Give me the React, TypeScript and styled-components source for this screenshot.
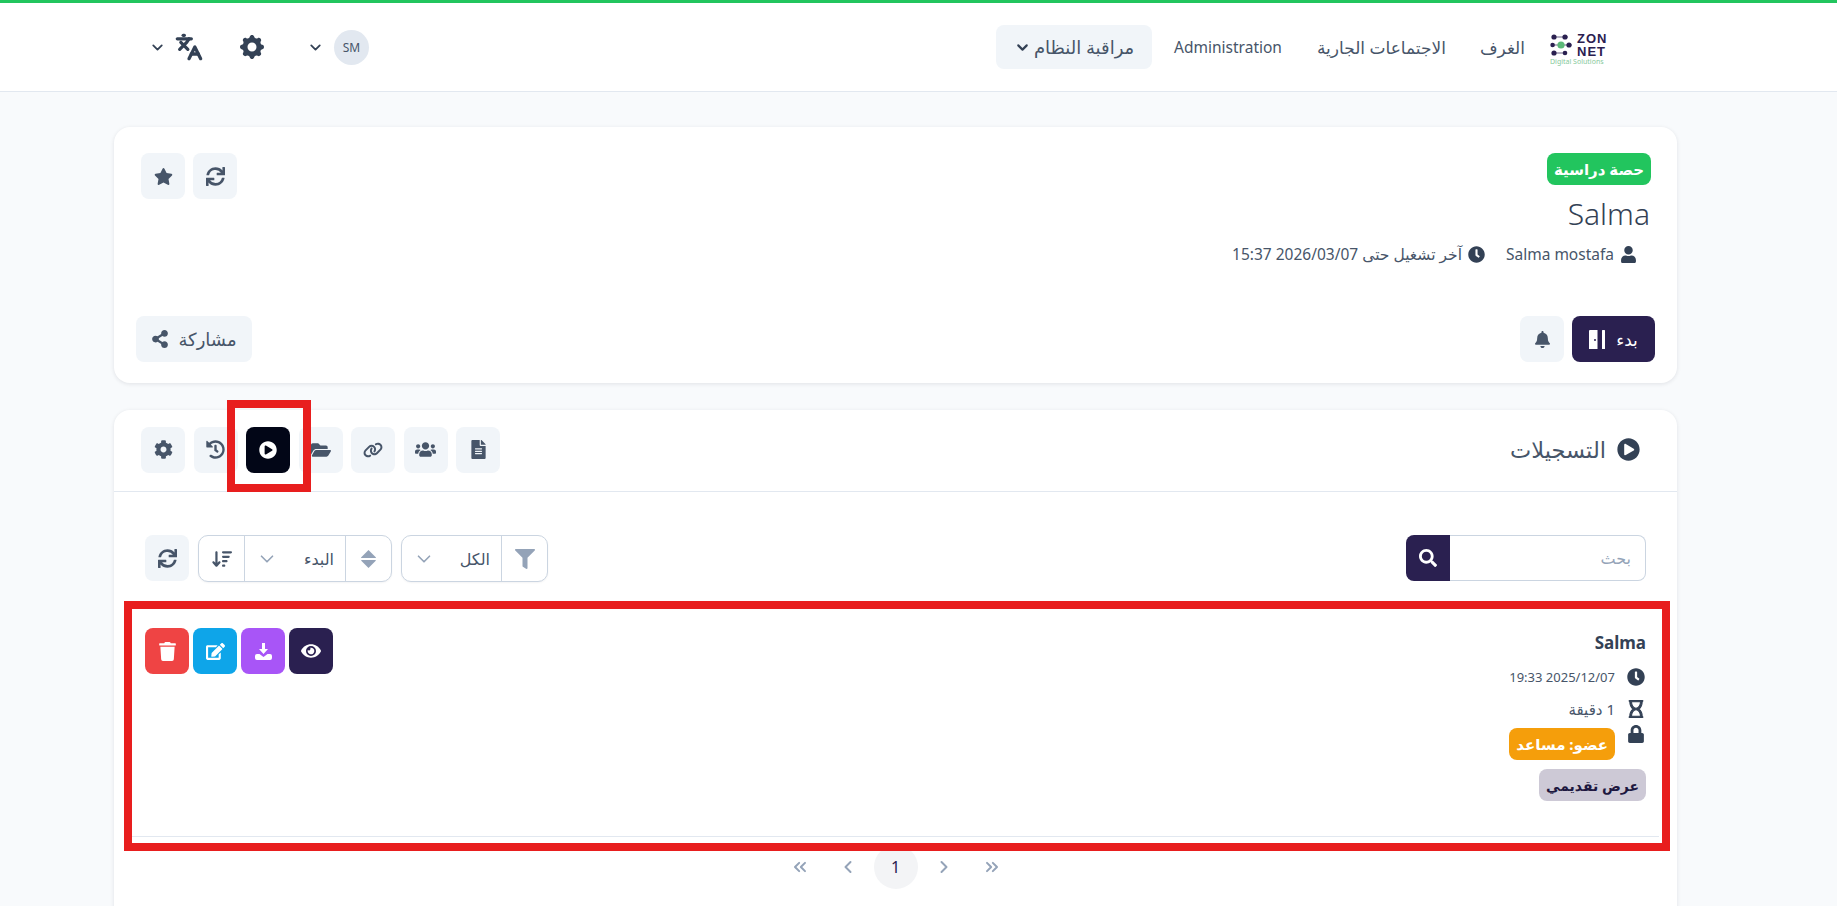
import React from "react";
import styled, { createGlobalStyle } from "styled-components";
import {
  FaBell,
  FaClock,
  FaCog,
  FaEdit,
  FaEye,
  FaFileAlt,
  FaFilter,
  FaFolderOpen,
  FaHistory,
  FaRegHourglass,
  FaLock,
  FaPlayCircle,
  FaSearch,
  FaShareAlt,
  FaStar,
  FaSync,
  FaTrash,
  FaUser,
  FaUsers,
} from "react-icons/fa";
import { FaLink, FaArrowDownWideShort } from "react-icons/fa6";
import { HiCog } from "react-icons/hi";
import {
  ChevronDown,
  ChevronLeft,
  ChevronRight,
  ChevronsLeft,
  ChevronsRight,
  Languages,
} from "lucide-react";

const GlobalStyle = createGlobalStyle`
  html, body {
    margin: 0;
    height: 100%;
    overflow: hidden;
    background: #f8fafc;
  }
  * {
    box-sizing: border-box;
  }
`;

const Page = styled.div`
  position: relative;
  height: 906px;
  overflow: hidden;
  font-family: "Noto Sans", "DejaVu Sans", sans-serif;
  color: #334155;
`;

const TopBar = styled.header`
  height: 92px;
  background: #fff;
  border-top: 3px solid #22c55e;
  border-bottom: 1px solid #e2e8f0;
  padding: 0 228px 0 149px;
  display: flex;
  align-items: center;
  justify-content: space-between;
`;

const NavLinks = styled.nav`
  display: flex;
  align-items: center;
`;

const LogoBox = styled.div`
  width: 59px;
  height: 33px;
  display: flex;
  flex-direction: column;
  margin-left: 25px;
  margin-top: 3px;
`;

const LogoTop = styled.div`
  direction: ltr;
  display: flex;
  align-items: center;
  gap: 3px;
`;

const LogoWords = styled.div`
  font-family: "Liberation Sans", sans-serif;
  font-weight: 700;
  font-size: 13px;
  line-height: 13px;
  letter-spacing: 1px;
  color: #2a2050;
`;

const LogoTag = styled.div`
  direction: ltr;
  font-size: 7px;
  line-height: 8px;
  color: #86c99b;
  white-space: nowrap;
`;

const NavLink = styled.a<{ $gap: number; $size: number }>`
  font-size: ${(p) => p.$size}px;
  color: #475569;
  margin-left: ${(p) => p.$gap}px;
  white-space: nowrap;
`;

const NavMenuButton = styled.button`
  width: 156px;
  height: 44px;
  border: 0;
  border-radius: 8px;
  background: #f1f5f9;
  color: #475569;
  font: inherit;
  font-size: 18px;
  display: flex;
  align-items: center;
  justify-content: center;
  gap: 3px;
  svg {
    color: #334155;
  }
`;

const UserTools = styled.div`
  display: flex;
  align-items: center;
`;

const Avatar = styled.div`
  width: 35px;
  height: 35px;
  border-radius: 50%;
  background: #e2e8f0;
  color: #475569;
  font-size: 12px;
  display: flex;
  align-items: center;
  justify-content: center;
`;

const ToolIcon = styled.span<{ $gap: number }>`
  display: flex;
  align-items: center;
  color: #334155;
  margin-right: ${(p) => p.$gap}px;
`;

const Main = styled.main`
  padding: 35px 160px 0 114px;
  display: flex;
  flex-direction: column;
  gap: 27px;
`;

const Card = styled.section`
  background: #fff;
  border-radius: 16px;
  box-shadow: 0 1px 4px rgba(15, 23, 42, 0.1);
`;

const HeroCard = styled(Card)`
  height: 256px;
  padding: 26px 22px 21px;
  display: flex;
  flex-direction: column;
  justify-content: space-between;
`;

const HeroTop = styled.div`
  display: flex;
  justify-content: space-between;
  align-items: flex-start;
  padding-left: 5px;
`;

const HeroInfo = styled.div`
  padding-right: 4px;
`;

const TypeBadge = styled.span<{ $bg: string; $fg?: string; $size?: number }>`
  display: inline-flex;
  align-items: center;
  height: 32px;
  padding: 0 7px;
  border-radius: 8px;
  font-size: ${(p) => p.$size ?? 15}px;
  font-weight: 700;
  white-space: nowrap;
  background: ${(p) => p.$bg};
  color: ${(p) => p.$fg ?? "#fff"};
`;

const RoleBadge = styled(TypeBadge)`
  margin-top: 4px;
`;

const RoomTitle = styled.h1`
  margin: 9px 1px 0 0;
  font-size: 30px;
  line-height: 40px;
  font-weight: 300;
  color: #334155;
`;

const MetaRow = styled.div`
  margin-top: 10px;
  padding-right: 14px;
  display: flex;
  align-items: center;
  gap: 21px;
  font-size: 15.5px;
  line-height: 20px;
  color: #475569;
`;

const MetaItem = styled.span`
  display: flex;
  align-items: center;
  gap: 6px;
  white-space: nowrap;
  svg {
    color: #334155;
    font-size: 17px;
    flex: none;
  }
`;

const ButtonRow = styled.div<{ $gap?: number }>`
  display: flex;
  align-items: center;
  gap: ${(p) => p.$gap ?? 8}px;
`;

const HeroBottom = styled.div`
  display: flex;
  justify-content: space-between;
  align-items: center;
`;

const IconButton = styled.button<{ $bg?: string; $fg?: string; $icon?: number }>`
  width: 44px;
  height: 46px;
  border: 0;
  padding: 0;
  border-radius: 8px;
  font-size: ${(p) => p.$icon ?? 19}px;
  background: ${(p) => p.$bg ?? "#f1f5f9"};
  color: ${(p) => p.$fg ?? "#475569"};
  display: flex;
  align-items: center;
  justify-content: center;
  flex: none;
`;

const StartButton = styled.button`
  width: 83px;
  height: 46px;
  border: 0;
  border-radius: 8px;
  background: #2a2050;
  color: #fff;
  font: inherit;
  font-size: 17px;
  display: flex;
  align-items: center;
  justify-content: center;
  gap: 11px;
`;

const ShareButton = styled.button`
  width: 116px;
  height: 46px;
  border: 0;
  border-radius: 8px;
  background: #f1f5f9;
  color: #475569;
  font: inherit;
  font-size: 18px;
  display: flex;
  align-items: center;
  justify-content: center;
  gap: 9px;
  svg {
    font-size: 18px;
  }
`;

const RecordingsCard = styled(Card)`
  height: 600px;
`;

const CardHeader = styled.div`
  height: 82px;
  padding: 0 37px 2px 27px;
  border-bottom: 1px solid #e2e8f0;
  display: flex;
  align-items: center;
  justify-content: space-between;
`;

const SectionTitle = styled.h2`
  margin: 0;
  font-size: 22.5px;
  font-weight: 400;
  color: #475569;
  display: flex;
  align-items: center;
  gap: 11px;
  svg {
    color: #334155;
    font-size: 23px;
  }
`;

const CardBody = styled.div`
  padding: 43px 18px 0;
`;

const Toolbar = styled.div`
  margin: 0 13px 46px;
  height: 47px;
  display: flex;
  align-items: flex-start;
  justify-content: space-between;
`;

const SearchBox = styled.div`
  width: 240px;
  height: 46px;
  display: flex;
`;

const SearchInput = styled.input`
  flex: 1;
  min-width: 0;
  height: 46px;
  border: 1px solid #cbd5e1;
  border-left: 0;
  border-radius: 0 8px 8px 0;
  padding: 0 14px;
  font: inherit;
  font-size: 16px;
  color: #334155;
  background: #fff;
  &::placeholder {
    color: #94a3b8;
  }
`;

const SearchButton = styled.button`
  width: 44px;
  height: 46px;
  border: 0;
  border-radius: 8px 0 0 8px;
  background: #2a2050;
  color: #fff;
  font-size: 18px;
  display: flex;
  align-items: center;
  justify-content: center;
`;

const Filters = styled.div`
  display: flex;
  gap: 9px;
`;

const SelectGroup = styled.div`
  height: 47px;
  border: 1px solid #cbd5e1;
  border-radius: 10px;
  display: flex;
  background: #fff;
  box-shadow: 0 1px 2px rgba(15, 23, 42, 0.05);
`;

const SelectAddon = styled.span<{ $fg?: string }>`
  width: 45px;
  display: flex;
  align-items: center;
  justify-content: center;
  font-size: 20px;
  color: ${(p) => p.$fg ?? "#94a3b8"};
`;

const SelectValue = styled.span<{ $width: number }>`
  width: ${(p) => p.$width}px;
  padding: 0 11px 0 11px;
  border-right: 1px solid #cbd5e1;
  border-left: 1px solid #cbd5e1;
  display: flex;
  align-items: center;
  justify-content: space-between;
  font-size: 16px;
  color: #475569;
  svg {
    color: #94a3b8;
  }
`;

const PlainSelectValue = styled(SelectValue)`
  border-left: 0;
`;

const RecordingItem = styled.article`
  padding: 0 13px 35px;
  border-bottom: 1px solid #e2e8f0;
  display: flex;
  justify-content: space-between;
  align-items: flex-start;
`;

const RecordingInfo = styled.div`
  display: flex;
  flex-direction: column;
  align-items: flex-start;
`;

const RecordingName = styled.div`
  font-size: 17px;
  font-weight: 700;
  line-height: 22px;
  margin-top: 4px;
  margin-bottom: 13px;
  color: #334155;
`;

const InfoRow = styled.div<{ $height: number; $size?: number }>`
  height: ${(p) => p.$height}px;
  display: flex;
  align-items: flex-start;
  gap: 11px;
  font-size: ${(p) => p.$size ?? 13}px;
  line-height: 20px;
  color: #475569;
  white-space: nowrap;
`;

const InfoIcon = styled.span`
  width: 20px;
  height: 20px;
  font-size: 18px;
  color: #334155;
  display: flex;
  align-items: center;
  justify-content: center;
`;

const ActionRow = styled.div`
  display: flex;
  gap: 4px;
`;

const Pager = styled.div`
  margin-top: 8px;
  display: flex;
  justify-content: center;
  gap: 4px;
`;

const PageItem = styled.span<{ $current?: boolean }>`
  width: 44px;
  height: 44px;
  border-radius: 50%;
  display: flex;
  align-items: center;
  justify-content: center;
  font-size: 16px;
  background: ${(p) => (p.$current ? "#f3f4f6" : "transparent")};
  color: ${(p) => (p.$current ? "#2a2050" : "#94a3b8")};
`;

// the red frames drawn over the capture
const MarkFrame = styled.div`
  position: absolute;
  border: 8px solid #e81e1e;
  pointer-events: none;
`;

const TabMark = styled(MarkFrame)`
  left: 227px;
  top: 400px;
  width: 84px;
  height: 92px;
`;

const ListMark = styled(MarkFrame)`
  left: 124px;
  top: 601px;
  width: 1546px;
  height: 250px;
`;

const ZonDots: React.FC = () => (
  <svg width="24" height="24" viewBox="0 0 24 24">
    <path d="M4 4H18M3 12H22M4 20H16" stroke="#2a2050" strokeWidth="0.7" />
    <circle cx="4" cy="4" r="2.6" fill="#2a2050" />
    <circle cx="15" cy="4" r="2.6" fill="#2a2050" />
    <circle cx="2.6" cy="12" r="2.3" fill="#2a2050" />
    <circle cx="11" cy="12" r="3.6" fill="#5cb878" />
    <circle cx="19" cy="12" r="2.6" fill="#2a2050" />
    <circle cx="4" cy="20" r="2.6" fill="#2a2050" />
    <circle cx="15" cy="20" r="2.3" fill="#2a2050" />
  </svg>
);

const DoorIcon: React.FC = () => (
  <svg width="16" height="19" viewBox="0 0 16 19" fill="#fff">
    <path d="M0 1 Q0 0 1 0 H8.5 V19 H0 Z M6 9 a1 1 0 1 0 0 2 a1 1 0 1 0 0 -2 Z" fillRule="evenodd" />
    <rect x="13" y="0" width="3" height="19" rx="0.5" />
  </svg>
);

const SortIcon: React.FC = () => (
  <svg width="15" height="18" viewBox="0 0 15 18" fill="currentColor">
    <path d="M7.5 0 L15 7.5 Q15 8 14 8 H1 Q0 8 0 7.5 Z" />
    <path d="M0 10.5 Q0 10 1 10 H14 Q15 10 15 10.5 L7.5 18 Z" />
  </svg>
);

const TrayDownloadIcon: React.FC = () => (
  <svg width="17" height="17" viewBox="0 0 17 17" fill="currentColor">
    <path d="M7 0 H10 V6 H13 L8.5 11 L4 6 H7 Z" />
    <path d="M0 13 Q0 11 2 11 H4.5 L8.5 14 L12.5 11 H15 Q17 11 17 13 V15 Q17 17 15 17 H2 Q0 17 0 15 Z" />
  </svg>
);

const App: React.FC = () => {
  return (
    <Page dir="rtl">
      <GlobalStyle />
      <TopBar>
        <NavLinks>
          <LogoBox>
            <LogoTop>
              <ZonDots />
              <LogoWords>
                ZON
                <br />
                NET
              </LogoWords>
            </LogoTop>
            <LogoTag>Digital Solutions</LogoTag>
          </LogoBox>
          <NavLink $gap={34} $size={17}>الغرف</NavLink>
          <NavLink $gap={35} $size={17}>الاجتماعات الجارية</NavLink>
          <NavLink $gap={22} $size={15.5}>Administration</NavLink>
          <NavMenuButton>
            مراقبة النظام
            <ChevronDown size={17} strokeWidth={3} />
          </NavMenuButton>
        </NavLinks>
        <UserTools>
          <Avatar>SM</Avatar>
          <ToolIcon $gap={10}>
            <ChevronDown size={17} strokeWidth={2.5} />
          </ToolIcon>
          <ToolIcon $gap={40}>
            <HiCog size={30} />
          </ToolIcon>
          <ToolIcon $gap={34}>
            <Languages size={28} strokeWidth={2.8} />
          </ToolIcon>
          <ToolIcon $gap={9}>
            <ChevronDown size={17} strokeWidth={2.5} />
          </ToolIcon>
        </UserTools>
      </TopBar>

      <Main>
        <HeroCard>
          <HeroTop>
            <HeroInfo>
              <TypeBadge $bg="#22c55e">حصة دراسية</TypeBadge>
              <RoomTitle>Salma</RoomTitle>
              <MetaRow>
                <MetaItem>
                  <FaUser />
                  Salma mostafa
                </MetaItem>
                <MetaItem>
                  <FaClock />
                  آخر تشغيل حتى 2026/03/07 15:37
                </MetaItem>
              </MetaRow>
            </HeroInfo>
            <ButtonRow>
              <IconButton>
                <FaSync />
              </IconButton>
              <IconButton>
                <FaStar />
              </IconButton>
            </ButtonRow>
          </HeroTop>
          <HeroBottom>
            <ButtonRow>
              <StartButton>
                بدء
                <DoorIcon />
              </StartButton>
              <IconButton $icon={17}>
                <FaBell />
              </IconButton>
            </ButtonRow>
            <ShareButton>
              مشاركة
              <FaShareAlt />
            </ShareButton>
          </HeroBottom>
        </HeroCard>

        <RecordingsCard>
          <CardHeader>
            <SectionTitle>
              <FaPlayCircle />
              التسجيلات
            </SectionTitle>
            <ButtonRow $gap={8.5}>
              <IconButton>
                <FaFileAlt />
              </IconButton>
              <IconButton $icon={21}>
                <FaUsers />
              </IconButton>
              <IconButton $icon={20}>
                <FaLink />
              </IconButton>
              <IconButton $icon={20}>
                <FaFolderOpen />
              </IconButton>
              <IconButton $bg="#020617" $fg="#fff" $icon={18}>
                <FaPlayCircle />
              </IconButton>
              <IconButton>
                <FaHistory />
              </IconButton>
              <IconButton>
                <FaCog />
              </IconButton>
            </ButtonRow>
          </CardHeader>

          <CardBody>
            <Toolbar>
              <SearchBox>
                <SearchInput placeholder="بحث" readOnly />
                <SearchButton>
                  <FaSearch />
                </SearchButton>
              </SearchBox>
              <Filters>
                <SelectGroup>
                  <SelectAddon>
                    <FaFilter />
                  </SelectAddon>
                  <PlainSelectValue $width={100}>
                    الكل
                    <ChevronDown size={22} strokeWidth={1.8} />
                  </PlainSelectValue>
                </SelectGroup>
                <SelectGroup>
                  <SelectAddon>
                    <SortIcon />
                  </SelectAddon>
                  <SelectValue $width={102}>
                    البدء
                    <ChevronDown size={22} strokeWidth={1.8} />
                  </SelectValue>
                  <SelectAddon $fg="#475569">
                    <FaArrowDownWideShort />
                  </SelectAddon>
                </SelectGroup>
                <IconButton>
                  <FaSync />
                </IconButton>
              </Filters>
            </Toolbar>

            <RecordingItem>
              <RecordingInfo>
                <RecordingName>Salma</RecordingName>
                <InfoRow $height={32}>
                  <InfoIcon>
                    <FaClock />
                  </InfoIcon>
                  2025/12/07 19:33
                </InfoRow>
                <InfoRow $height={25} $size={15}>
                  <InfoIcon>
                    <FaRegHourglass stroke="currentColor" strokeWidth={30} />
                  </InfoIcon>
                  1 دقيقة
                </InfoRow>
                <InfoRow $height={45}>
                  <InfoIcon>
                    <FaLock />
                  </InfoIcon>
                  <RoleBadge $bg="#f59e0b">عضو: مساعد</RoleBadge>
                </InfoRow>
                <TypeBadge $bg="#cdc9d6" $fg="#1e1840" $size={14}>
                  عرض تقديمي
                </TypeBadge>
              </RecordingInfo>
              <ActionRow>
                <IconButton $bg="#2a2050" $fg="#fff" $icon={20}>
                  <FaEye />
                </IconButton>
                <IconButton $bg="#a855f7" $fg="#fff">
                  <TrayDownloadIcon />
                </IconButton>
                <IconButton $bg="#0ea5e9" $fg="#fff">
                  <FaEdit />
                </IconButton>
                <IconButton $bg="#ef4444" $fg="#fff">
                  <FaTrash />
                </IconButton>
              </ActionRow>
            </RecordingItem>

            <Pager>
              <PageItem>
                <ChevronsRight size={20} strokeWidth={2.4} />
              </PageItem>
              <PageItem>
                <ChevronRight size={20} strokeWidth={2.4} />
              </PageItem>
              <PageItem $current>1</PageItem>
              <PageItem>
                <ChevronLeft size={20} strokeWidth={2.4} />
              </PageItem>
              <PageItem>
                <ChevronsLeft size={20} strokeWidth={2.4} />
              </PageItem>
            </Pager>
          </CardBody>
        </RecordingsCard>
      </Main>

      <TabMark />
      <ListMark />
    </Page>
  );
};

export default App;
